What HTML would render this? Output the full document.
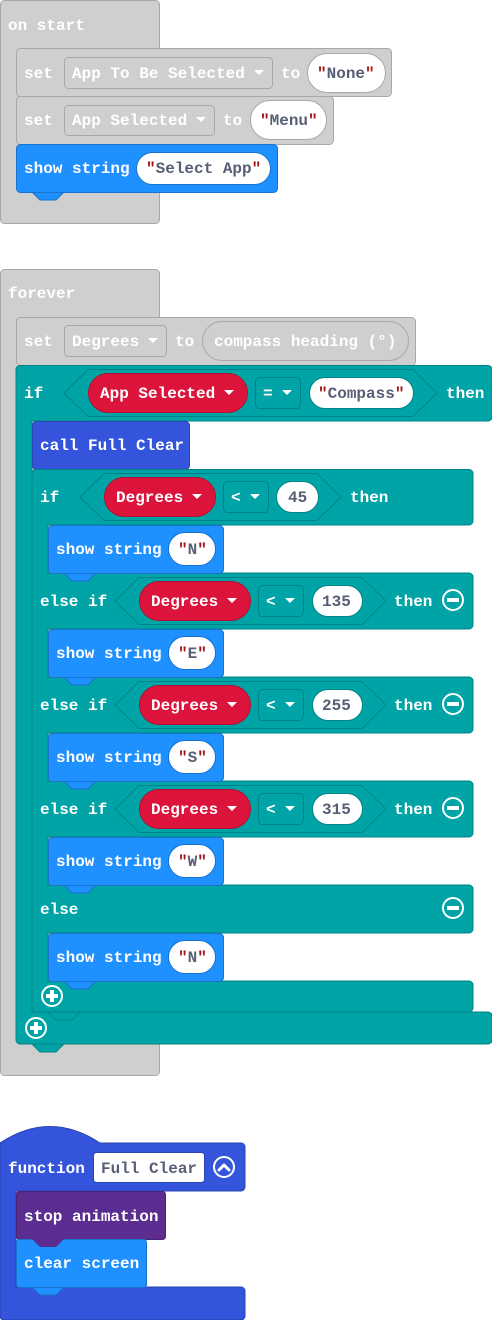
<!DOCTYPE html>
<html><head><meta charset="utf-8"><style>
html,body{margin:0;padding:0;background:#fff;}
svg{display:block}
text{font-family:"Liberation Mono",monospace;font-weight:bold;font-size:16px;}
.w{fill:#fff}
.d{fill:#575e75}
.q{fill:#a31515}
</style></head><body>
<svg width="492" height="1320" viewBox="0 0 492 1320" xmlns="http://www.w3.org/2000/svg">
<rect x="0.5" y="0.5" width="159" height="223" rx="4" fill="#cfcfcf" stroke="#a8a8a8"/>
<text x="8" y="30" class="w">on start</text>
<rect x="16.5" y="48.5" width="375" height="48" rx="4" fill="#cfcfcf" stroke="#a8a8a8"/>
<text x="24" y="78" class="w">set</text>
<rect x="64.5" y="57.5" width="208" height="31" rx="4" fill="#cfcfcf" stroke="#a8a8a8"/>
<text x="72" y="78" class="w">App To Be Selected</text>
<path d="M254 70 L264 70 L259 75 Z" fill="#fff"/>
<text x="281" y="78" class="w">to</text>
<rect x="307.5" y="53.5" width="78" height="39" rx="19.5" fill="#fff" stroke="#a8a8a8"/>
<text x="317" y="78"><tspan class="q">"</tspan><tspan class="d">None</tspan><tspan class="q">"</tspan></text>
<rect x="16.5" y="96.5" width="317" height="48" rx="4" fill="#cfcfcf" stroke="#a8a8a8"/>
<text x="24" y="125" class="w">set</text>
<rect x="64.5" y="105.5" width="150" height="30" rx="4" fill="#cfcfcf" stroke="#a8a8a8"/>
<text x="72" y="125" class="w">App Selected</text>
<path d="M196 117 L206 117 L201 122 Z" fill="#fff"/>
<text x="223" y="125" class="w">to</text>
<rect x="250.5" y="100.5" width="76" height="39" rx="19.5" fill="#fff" stroke="#a8a8a8"/>
<text x="260" y="125"><tspan class="q">"</tspan><tspan class="d">Menu</tspan><tspan class="q">"</tspan></text>
<path d="M32 192 L40 200 L56 200 L64 192 Z" fill="#1e90ff" stroke="#1873cc"/>
<rect x="16.5" y="144.5" width="261" height="48" rx="4" fill="#1e90ff" stroke="#1873cc"/>
<text x="24" y="173" class="w">show string</text>
<rect x="136.5" y="152.5" width="134" height="32" rx="16" fill="#fff" stroke="#1873cc"/>
<text x="146" y="173"><tspan class="q">"</tspan><tspan class="d">Select App</tspan><tspan class="q">"</tspan></text>

<rect x="0.5" y="269.5" width="159" height="806" rx="4" fill="#cfcfcf" stroke="#a8a8a8"/>
<text x="8" y="298" class="w">forever</text>
<rect x="16.5" y="317.5" width="399" height="48" rx="4" fill="#cfcfcf" stroke="#a8a8a8"/>
<text x="24" y="346" class="w">set</text>
<rect x="64.5" y="325.5" width="102" height="31" rx="4" fill="#cfcfcf" stroke="#a8a8a8"/>
<text x="72" y="346" class="w">Degrees</text>
<path d="M148 338 L158 338 L153 343 Z" fill="#fff"/>
<text x="175" y="346" class="w">to</text>
<rect x="202.5" y="321.5" width="206" height="39" rx="19.5" fill="#cfcfcf" stroke="#a8a8a8"/>
<text x="214" y="346" class="w">compass heading (°)</text>

<path d="M32 1044 L40 1052 L56 1052 L64 1044 Z" fill="#00a4a6" stroke="#008385"/>
<path d="M20 365.5 H488 a4 4 0 0 1 4 4 V417 a4 4 0 0 1 -4 4 H32 V1012 H488 a4 4 0 0 1 4 4 V1040 a4 4 0 0 1 -4 4 H20 a4 4 0 0 1 -4 -4 V369.5 a4 4 0 0 1 4 -4 Z" fill="#00a4a6" stroke="#008385"/>
<text x="24" y="398" class="w">if</text>
<path d="M88 369.5 H413 L437 393 L413 416.5 H88 L64 393 Z" fill="#00a4a6" stroke="#008385"/>
<rect x="88.5" y="373.5" width="159" height="39" rx="19.5" fill="#dc143c" stroke="#b0102f"/>
<text x="100" y="398" class="w">App Selected</text>
<path d="M224 390 L234 390 L229 395 Z" fill="#fff"/>
<rect x="255.5" y="377.5" width="45" height="31" rx="4" fill="#00a4a6" stroke="#008385"/>
<text x="263" y="398" class="w">=</text>
<path d="M282 390 L292 390 L287 395 Z" fill="#fff"/>
<rect x="309.5" y="377.5" width="104" height="31" rx="15.5" fill="#fff" stroke="#008385"/>
<text x="318" y="398"><tspan class="q">"</tspan><tspan class="d">Compass</tspan><tspan class="q">"</tspan></text>
<text x="446" y="398" class="w">then</text>

<path d="M48 469 L56 477 L72 477 L80 469 Z" fill="#3455db" stroke="#2a44b0"/>
<rect x="32.5" y="421.5" width="157" height="48" rx="4" fill="#3455db" stroke="#2a44b0"/>
<text x="40" y="450" class="w">call Full Clear</text>

<path d="M48 1012 L56 1020 L72 1020 L80 1012 Z" fill="#00a4a6" stroke="#008385"/>
<path d="M36 469.5 H469 a4 4 0 0 1 4 4 V521 a4 4 0 0 1 -4 4 H48 V573 H469 a4 4 0 0 1 4 4 V625 a4 4 0 0 1 -4 4 H48 V677 H469 a4 4 0 0 1 4 4 V729 a4 4 0 0 1 -4 4 H48 V781 H469 a4 4 0 0 1 4 4 V833 a4 4 0 0 1 -4 4 H48 V885 H469 a4 4 0 0 1 4 4 V929 a4 4 0 0 1 -4 4 H48 V981 H469 a4 4 0 0 1 4 4 V1008 a4 4 0 0 1 -4 4 H36 a4 4 0 0 1 -4 -4 V473.5 a4 4 0 0 1 4 -4 Z" fill="#00a4a6" stroke="#008385"/>

<text x="40" y="502" class="w">if</text>
<path d="M104 473.5 H317 L341 497 L317 520.5 H104 L80 497 Z" fill="#00a4a6" stroke="#008385"/>
<rect x="104.5" y="477.5" width="111" height="39" rx="19.5" fill="#dc143c" stroke="#b0102f"/>
<text x="116" y="502" class="w">Degrees</text>
<path d="M192 494 L202 494 L197 499 Z" fill="#fff"/>
<rect x="223.5" y="481.5" width="45" height="31" rx="4" fill="#00a4a6" stroke="#008385"/>
<text x="231" y="502" class="w">&lt;</text>
<path d="M250 494 L260 494 L255 499 Z" fill="#fff"/>
<rect x="276.5" y="481.5" width="42" height="31" rx="15.5" fill="#fff" stroke="#008385"/>
<text x="288" y="502" class="d">45</text>
<text x="350" y="502" class="w">then</text>

<g id="r1">
<text x="40" y="606" class="w">else if</text>
<path d="M139 577.5 H362 L386 601 L362 624.5 H139 L115 601 Z" fill="#00a4a6" stroke="#008385"/>
<rect x="139.5" y="581.5" width="111" height="39" rx="19.5" fill="#dc143c" stroke="#b0102f"/>
<text x="151" y="606" class="w">Degrees</text>
<path d="M227 598 L237 598 L232 603 Z" fill="#fff"/>
<rect x="258.5" y="585.5" width="45" height="31" rx="4" fill="#00a4a6" stroke="#008385"/>
<text x="266" y="606" class="w">&lt;</text>
<path d="M285 598 L295 598 L290 603 Z" fill="#fff"/>
<rect x="312.5" y="585.5" width="50" height="31" rx="15.5" fill="#fff" stroke="#008385"/>
<text x="394" y="606" class="w">then</text>
<circle cx="453" cy="600" r="10" fill="none" stroke="#fff" stroke-width="2"/>
<rect x="447" y="598" width="12" height="4" fill="#fff"/>
</g>
<text x="322" y="606" class="d">135</text>
<use href="#r1" y="104"/>
<text x="322" y="710" class="d">255</text>
<use href="#r1" y="208"/>
<text x="322" y="814" class="d">315</text>

<text x="40" y="914" class="w">else</text>
<circle cx="453" cy="908" r="10" fill="none" stroke="#fff" stroke-width="2"/>
<rect x="447" y="906" width="12" height="4" fill="#fff"/>

<g id="s1">
<path d="M64 573 L72 581 L88 581 L96 573 Z" fill="#1e90ff" stroke="#1873cc"/>
<rect x="48.5" y="525.5" width="175" height="48" rx="4" fill="#1e90ff" stroke="#1873cc"/>
<text x="56" y="554" class="w">show string</text>
<rect x="168.5" y="532.5" width="47" height="33" rx="16.5" fill="#fff" stroke="#1873cc"/>
</g>
<text x="178" y="554"><tspan class="q">"</tspan><tspan class="d">N</tspan><tspan class="q">"</tspan></text>
<use href="#s1" y="104"/>
<text x="178" y="658"><tspan class="q">"</tspan><tspan class="d">E</tspan><tspan class="q">"</tspan></text>
<use href="#s1" y="208"/>
<text x="178" y="762"><tspan class="q">"</tspan><tspan class="d">S</tspan><tspan class="q">"</tspan></text>
<use href="#s1" y="312"/>
<text x="178" y="866"><tspan class="q">"</tspan><tspan class="d">W</tspan><tspan class="q">"</tspan></text>
<use href="#s1" y="408"/>
<text x="178" y="962"><tspan class="q">"</tspan><tspan class="d">N</tspan><tspan class="q">"</tspan></text>

<circle cx="52" cy="996" r="10" fill="none" stroke="#fff" stroke-width="2"/>
<path d="M46 996 H58 M52 990 V1002" stroke="#fff" stroke-width="4"/>
<circle cx="36" cy="1028" r="10" fill="none" stroke="#fff" stroke-width="2"/>
<path d="M30 1028 H42 M36 1022 V1034" stroke="#fff" stroke-width="4"/>

<path d="M0 1143 Q50 1110 100 1143 H241 a4 4 0 0 1 4 4 V1187 a4 4 0 0 1 -4 4 H16 V1287 H241 a4 4 0 0 1 4 4 V1316 a4 4 0 0 1 -4 4 H4 a4 4 0 0 1 -4 -4 Z" fill="#3455db" stroke="#2a44b0"/>
<text x="8" y="1173" class="w">function</text>
<rect x="93.5" y="1152.5" width="111" height="30" rx="3" fill="#fff" stroke="#2a44b0"/>
<text x="101" y="1173" class="d">Full Clear</text>
<circle cx="224" cy="1167" r="10" fill="none" stroke="#fff" stroke-width="2"/>
<path d="M219 1170 L224 1165 L229 1170" fill="none" stroke="#fff" stroke-width="3" stroke-linecap="round" stroke-linejoin="round"/>
<path d="M32 1239 L40 1247 L56 1247 L64 1239 Z" fill="#5c2d91" stroke="#4a2475"/>
<rect x="16.5" y="1191.5" width="149" height="48" rx="3" fill="#5c2d91" stroke="#4a2475"/>
<text x="24" y="1221" class="w">stop animation</text>
<path d="M32 1287 L40 1295 L56 1295 L64 1287 Z" fill="#1e90ff" stroke="#1873cc"/>
<rect x="16.5" y="1239.5" width="130" height="48" rx="3" fill="#1e90ff" stroke="#1873cc"/>
<path d="M32 1239 L40 1247 L56 1247 L64 1239 Z" fill="#5c2d91"/>
<text x="24" y="1268" class="w">clear screen</text>
</svg>
</body></html>
